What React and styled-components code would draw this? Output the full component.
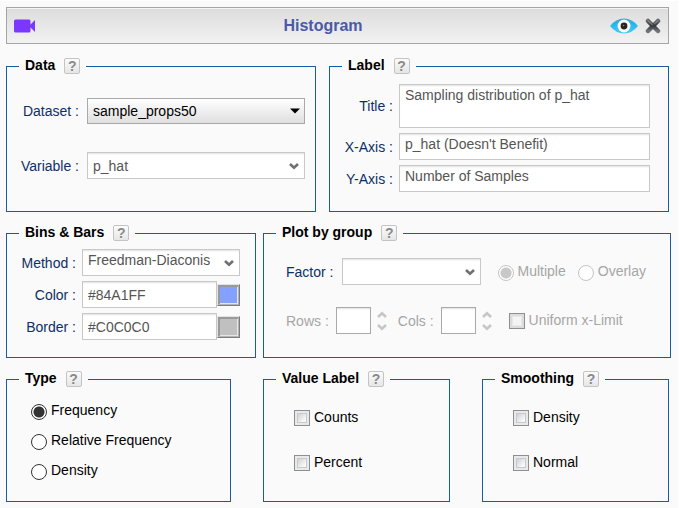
import React, { useState } from "react";
import styled, { createGlobalStyle, css } from "styled-components";

const GlobalStyle = createGlobalStyle`
  *, *::before, *::after { box-sizing: border-box; }
  body {
    margin: 0;
    background: #ffffff;
    font-family: "Liberation Sans", Arial, sans-serif;
    font-size: 14px;
    line-height: 16px;
    color: #000000;
  }
  button, input, select, textarea { font: inherit; margin: 0; }
`;

const Page = styled.main`
  display: flex;
  flex-direction: column;
  gap: 13px;
  margin: 1px 2px 0 0;
  padding: 6px 7px 6px 6px;
  background: #fafafa;
`;

const Header = styled.header`
  display: flex;
  align-items: center;
  justify-content: space-between;
  height: 37px;
  margin: 0 2px 1px 0;
  padding: 0 7px;
  border: 1px solid #a5a5a5;
  box-shadow: inset 0 1px 0 #f4f4f4;
  background: linear-gradient(#dcdcdc, #f2f2f2);
`;

const Title = styled.h1`
  margin: 0;
  font-size: 16px;
  line-height: 18px;
  color: #4a5aa8;
`;

const Actions = styled.div`
  display: flex;
  align-items: center;
  gap: 7px;
`;

const IconButton = styled.button`
  display: flex;
  padding: 0;
  border: 0;
  background: none;
  cursor: pointer;
`;

const Row = styled.div`
  display: grid;
  grid-template-columns: ${(p) => p.$columns};
  column-gap: ${(p) => p.$gap};
  margin-right: ${(p) => (p.$wide ? "0" : "2px")};
`;

const Panel = styled.fieldset`
  min-width: 0;
  margin: 0;
  padding: 0 10px 0 12px;
  border: 1px solid #175ca4;
`;

const Legend = styled.legend`
  display: flex;
  align-items: flex-start;
  gap: 9px;
  height: 16px;
  padding: 0 6px;
  font-weight: bold;
  line-height: 14px;
  white-space: nowrap;
`;

const HelpButton = styled.button`
  width: 16px;
  height: 16px;
  padding: 0;
  border: 1px solid #c4c4c4;
  border-radius: 2px;
  background: linear-gradient(#fbfbfb, #e6e6e6);
  color: #8a8a8a;
  font-size: 14px;
  font-weight: bold;
  line-height: 14px;
  text-align: center;
  cursor: pointer;
`;

const Form = styled.div`
  display: grid;
  grid-template-columns: ${(p) => p.$labels} minmax(0, 1fr);
  align-items: center;
  column-gap: ${(p) => p.$gap};
  row-gap: ${(p) => p.$rowGap};
  padding: ${(p) => p.$padding};
`;

const Label = styled.label`
  color: ${(p) => (p.$muted ? "#a6a6a6" : "#0d3066")};
  text-align: right;
  white-space: nowrap;
`;

const field = css`
  display: block;
  width: 100%;
  height: 27px;
  border: 1px solid #c8c8c8;
  border-radius: 0;
  outline: none;
  background: #ffffff;
  box-shadow: inset 0 2px 2px -1px #e2e2e2;
  color: #555555;
`;

const TextArea = styled.textarea`
  ${field}
  height: ${(p) => (p.$tall ? "44px" : "27px")};
  padding: 2px 5px;
  overflow: hidden;
  resize: none;
`;

const TextInput = styled.input`
  ${field}
  padding: 1px 5px 0;
`;

const NumberInput = styled.input`
  ${field}
  width: 35px;
  padding: 0 4px;
  border-color: #a9a9a9;
`;

const SelectFrame = styled.div`
  position: relative;
  flex: 1;
  min-width: 0;
`;

const Select = styled.select`
  ${field}
  appearance: none;
  height: ${(p) => (p.$raised ? "26px" : "27px")};
  padding: ${(p) => (p.$top ? "0 20px 6px 5px" : "0 20px 0 5px")};
  ${(p) =>
    p.$raised &&
    css`
      border-color: #a9a9a9;
      background: linear-gradient(#ffffff, #dfdfdf);
      box-shadow: none;
      color: #000000;
    `}
`;

const SelectArrow = styled.span`
  position: absolute;
  top: 0;
  right: 5px;
  bottom: 0;
  display: flex;
  align-items: center;
  pointer-events: none;
`;

const ColorField = styled.div`
  display: flex;
  align-items: center;
`;

const Swatch = styled.button`
  flex: none;
  width: 23px;
  height: 22px;
  padding: 0;
  border: 1px solid;
  border-color: #e3e3e3 #7c7c7c #7c7c7c #e3e3e3;
  box-shadow: inset -1px -1px 0 #b4b4b4, inset 2px 2px 0 #9a9a9a,
    inset -2px -2px 0 #e6e6e6;
  background: ${(p) => p.$color};
  cursor: pointer;
`;

const Stack = styled.div`
  display: flex;
  flex-direction: column;
  align-items: flex-start;
  gap: ${(p) => p.$gap};
  padding: ${(p) => p.$padding};
`;

const GroupRow = styled.div`
  display: flex;
  align-items: center;
  align-self: stretch;
`;

const Pair = styled.div`
  display: flex;
  align-items: center;
  flex: ${(p) => (p.$grow ? "1" : "none")};
  gap: ${(p) => (p.$grow ? "9px" : "7px")};
  margin-right: ${(p) => p.$after};
`;

const Stepper = styled.div`
  display: flex;
  align-items: center;
  gap: 5px;
`;

const StepButtons = styled.div`
  display: flex;
  flex-direction: column;
  gap: 4px;
`;

const Choices = styled.div`
  display: flex;
  gap: 12px;
`;

const Choice = styled.label`
  display: flex;
  align-items: flex-start;
  gap: 4px;
  height: 18px;
  color: ${(p) => (p.$muted ? "#a6a6a6" : "#000000")};
  white-space: nowrap;
`;

const Radio = styled.input.attrs({ type: "radio" })`
  appearance: none;
  flex: none;
  width: 16px;
  height: 16px;
  margin-top: 2px;
  border: 1px solid ${(p) => (p.disabled ? "#c4c4c4" : "#333333")};
  border-radius: 50%;
  background: #ffffff;

  &:checked {
    background: radial-gradient(
      circle,
      ${(p) => (p.disabled ? "#c8c8c8" : "#333333")} 5px,
      #ffffff 6px
    );
  }
`;

const Checkbox = styled.input.attrs({ type: "checkbox" })`
  appearance: none;
  display: flex;
  flex: none;
  width: 16px;
  height: 16px;
  margin-top: 1px;
  padding: 2px;
  border: 1px solid #8e8f8f;
  background: ${(p) => (p.disabled ? "#dcdcdc" : "#e9e9e9")};

  &::before {
    content: "";
    flex: 1;
    border: 1px solid ${(p) => (p.disabled ? "#e9e9e9" : "#c6c9ce")};
    background: ${(p) =>
      p.disabled ? "#f4f4f4" : "linear-gradient(135deg, #cdd1d8, #f8f8f8 80%)"};
  }

  &:checked::before {
    background: #555555;
  }
`;

const CameraIcon = () => (
  <svg width="22" height="14" viewBox="0 0 22 14" aria-hidden="true">
    <rect x="0" y="0.5" width="16.5" height="13" rx="1.5" fill="#7b36ff" />
    <path d="M16 6 21 1V13L16 8Z" fill="#7b36ff" />
  </svg>
);

const EyeIcon = () => (
  <svg width="28" height="16" viewBox="0 0 28 16" aria-hidden="true">
    <defs>
      <linearGradient id="eye" x1="0" x2="0" y1="0" y2="1">
        <stop offset="0" stopColor="#3f9fc4" />
        <stop offset="0.35" stopColor="#27b5e8" />
        <stop offset="1" stopColor="#45cdf8" />
      </linearGradient>
    </defs>
    <path d="M0 8Q6 0.5 14 0.5T28 8Q22 15.5 14 15.5T0 8Z" fill="url(#eye)" />
    <circle cx="14" cy="8" r="6.5" fill="#f7fcfe" />
    <circle cx="14" cy="8" r="3.4" fill="#2b2320" />
    <circle cx="13.5" cy="7.5" r="0.8" fill="#8b817c" />
  </svg>
);

const CloseIcon = () => (
  <svg width="16" height="16" viewBox="0 0 16 16" aria-hidden="true">
    <defs>
      <linearGradient id="close" x1="0" x2="0" y1="0" y2="1">
        <stop offset="0" stopColor="#62666a" />
        <stop offset="0.5" stopColor="#35393d" />
        <stop offset="1" stopColor="#70757b" />
      </linearGradient>
    </defs>
    <path d="M3 3 13 13M13 3 3 13" stroke="url(#close)" strokeWidth="4.5" strokeLinecap="round" />
    <path d="M3 2.5 7 6.5M13 2.5 10 5.5" stroke="#989da1" strokeWidth="1" strokeLinecap="round" />
  </svg>
);

const Triangle = () => (
  <svg width="10" height="6" viewBox="0 0 10 6" aria-hidden="true">
    <path d="M0 0.5H10L5 5.5Z" fill="#000000" />
  </svg>
);

const Chevron = ({ up, color = "#707070" }) => (
  <svg width="12" height="8" viewBox="0 0 12 8" aria-hidden="true">
    <path
      d={up ? "M2 6 6 2.2 10 6" : "M2 2 6 5.8 10 2"}
      fill="none"
      stroke={color}
      strokeWidth="2.6"
    />
  </svg>
);

const Help = ({ topic }) => (
  <HelpButton type="button" aria-label={`Help: ${topic}`}>
    ?
  </HelpButton>
);

const Section = ({ title, children }) => (
  <Panel>
    <Legend>
      {title}
      <Help topic={title} />
    </Legend>
    {children}
  </Panel>
);

const Dropdown = ({ id, options, raised, top }) => (
  <SelectFrame>
    <Select id={id} $raised={raised} $top={top}>
      {options.map((o) => (
        <option key={o}>{o}</option>
      ))}
    </Select>
    <SelectArrow>{raised ? <Triangle /> : <Chevron />}</SelectArrow>
  </SelectFrame>
);

const ColorInput = ({ id, initial, name }) => {
  const [value, setValue] = useState(initial);
  return (
    <ColorField>
      <TextInput id={id} value={value} onChange={(e) => setValue(e.target.value)} />
      <Swatch type="button" $color={value} aria-label={`Pick ${name}`} />
    </ColorField>
  );
};

const CountStepper = ({ id }) => (
  <Stepper>
    <NumberInput id={id} type="text" disabled />
    <StepButtons>
      <IconButton type="button" disabled aria-label="Increase">
        <Chevron up color="#c6c6c6" />
      </IconButton>
      <IconButton type="button" disabled aria-label="Decrease">
        <Chevron color="#c6c6c6" />
      </IconButton>
    </StepButtons>
  </Stepper>
);

export default function App() {
  return (
    <>
      <GlobalStyle />
      <Page>
        <Header>
          <IconButton type="button" aria-label="Watch video">
            <CameraIcon />
          </IconButton>
          <Title>Histogram</Title>
          <Actions>
            <IconButton type="button" aria-label="Preview">
              <EyeIcon />
            </IconButton>
            <IconButton type="button" aria-label="Close">
              <CloseIcon />
            </IconButton>
          </Actions>
        </Header>

        <Row $columns="310fr 340fr" $gap="13px">
          <Section title="Data">
            <Form $labels="60px" $gap="8px" $rowGap="28px" $padding="24px 0 32px">
              <Label htmlFor="dataset">Dataset :</Label>
              <Dropdown id="dataset" options={["sample_props50"]} raised />
              <Label htmlFor="variable">Variable :</Label>
              <Dropdown id="variable" options={["p_hat"]} />
            </Form>
          </Section>
          <Section title="Label">
            <Form $labels="51px" $gap="6px" $rowGap="5px" $padding="10px 8px 19px 0">
              <Label htmlFor="title">Title :</Label>
              <TextArea id="title" $tall defaultValue="Sampling distribution of p_hat" />
              <Label htmlFor="x-axis">X-Axis :</Label>
              <TextArea id="x-axis" defaultValue="p_hat (Doesn't Benefit)" />
              <Label htmlFor="y-axis">Y-Axis :</Label>
              <TextArea id="y-axis" defaultValue="Number of Samples" />
            </Form>
          </Section>
        </Row>

        <Row $columns="250fr 408fr" $gap="7px" $wide>
          <Section title="Bins & Bars">
            <Form $labels="57px" $gap="6px" $rowGap="5px" $padding="8px 5px 16px 0">
              <Label htmlFor="method">Method :</Label>
              <Dropdown id="method" options={["Freedman-Diaconis"]} top />
              <Label htmlFor="color">Color :</Label>
              <ColorInput id="color" initial="#84A1FF" name="color" />
              <Label htmlFor="border">Border :</Label>
              <ColorInput id="border" initial="#C0C0C0" name="border color" />
            </Form>
          </Section>
          <Section title="Plot by group">
            <Stack $gap="22px" $padding="17px 14px 23px 10px">
              <GroupRow>
                <Pair $grow $after="17px">
                  <Label htmlFor="factor">Factor :</Label>
                  <Dropdown id="factor" options={[""]} />
                </Pair>
                <Choices>
                  <Choice $muted>
                    <Radio name="layout" defaultChecked disabled />
                    Multiple
                  </Choice>
                  <Choice $muted>
                    <Radio name="layout" disabled />
                    Overlay
                  </Choice>
                </Choices>
              </GroupRow>
              <GroupRow>
                <Pair $after="10px">
                  <Label htmlFor="rows" $muted>Rows :</Label>
                  <CountStepper id="rows" />
                </Pair>
                <Pair $after="16px">
                  <Label htmlFor="cols" $muted>Cols :</Label>
                  <CountStepper id="cols" />
                </Pair>
                <Choice $muted>
                  <Checkbox disabled />
                  Uniform x-Limit
                </Choice>
              </GroupRow>
            </Stack>
          </Section>
        </Row>

        <Row $columns="225fr 187fr 187fr" $gap="32px">
          <Section title="Type">
            <Stack $gap="12px" $padding="15px 0 21px 12px">
              <Choice>
                <Radio name="type" defaultChecked />
                Frequency
              </Choice>
              <Choice>
                <Radio name="type" />
                Relative Frequency
              </Choice>
              <Choice>
                <Radio name="type" />
                Density
              </Choice>
            </Stack>
          </Section>
          <Section title="Value Label">
            <Stack $gap="27px" $padding="22px 0 29px 18px">
              <Choice>
                <Checkbox />
                Counts
              </Choice>
              <Choice>
                <Checkbox />
                Percent
              </Choice>
            </Stack>
          </Section>
          <Section title="Smoothing">
            <Stack $gap="27px" $padding="22px 0 29px 18px">
              <Choice>
                <Checkbox />
                Density
              </Choice>
              <Choice>
                <Checkbox />
                Normal
              </Choice>
            </Stack>
          </Section>
        </Row>
      </Page>
    </>
  );
}
